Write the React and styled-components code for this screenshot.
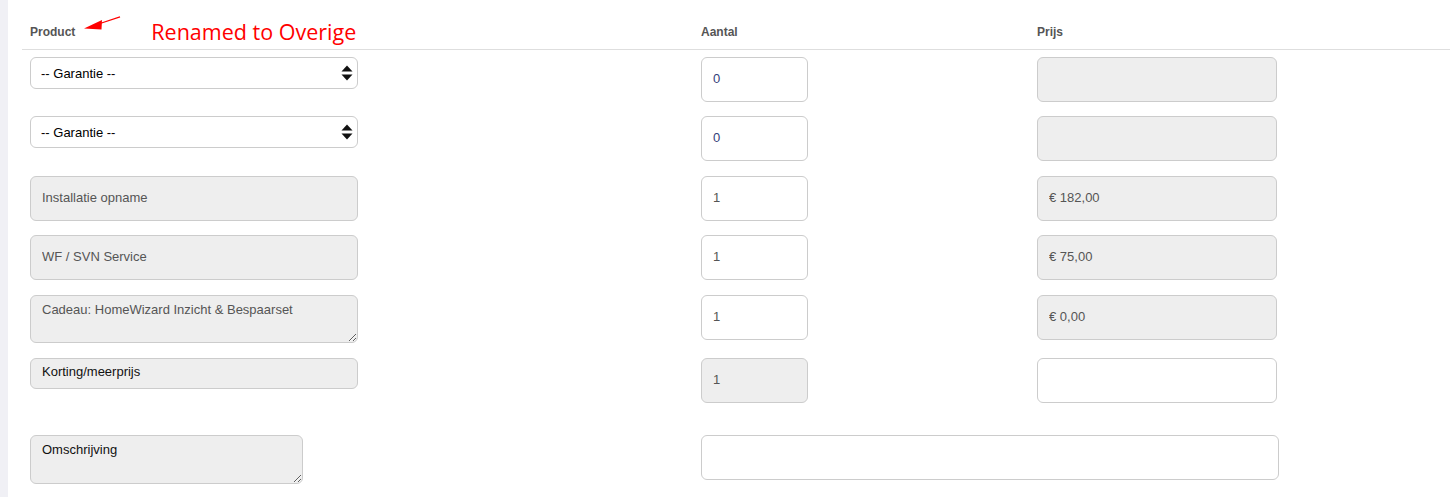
import React from "react";
import styled, { createGlobalStyle } from "styled-components";

const GlobalStyle = createGlobalStyle`
	html, body {
		margin: 0;
		padding: 0;
		background: #fff;
		font-family: "Liberation Sans", Arial, sans-serif;
	}
	* {
		box-sizing: border-box;
	}
`;

const Page = styled.div`
	display: flex;
	min-height: 497px;
	width: 1450px;
	overflow: hidden;
`;

const SideStrip = styled.div`
	width: 8px;
	flex: 0 0 8px;
	background-color: #f0f0f5;
`;

const Main = styled.main`
	flex: 1;
	margin-left: 14px;
`;

const HeaderRow = styled.div`
	display: grid;
	grid-template-columns: 671px 336px 1fr;
	height: 50px;
	padding: 24px 0 0 8px;
	border-bottom: 1px solid #dedede;
`;

const HeadCell = styled.div`
	display: flex;
	align-items: center;
	height: 16px;
`;

const HeadLabel = styled.span`
	font-size: 12px;
	font-weight: bold;
	color: #555;
	line-height: 16px;
`;

const Annotation = styled.span`
	margin-left: 30px;
	font-family: "Open Sans", "Noto Sans", sans-serif;
	font-size: 21.5px;
	color: #ff0000;
	line-height: 16px;
`;

const ArrowIcon = styled.svg`
	margin-left: 8px;
	position: relative;
	top: -8px;
	flex: 0 0 auto;
`;

const Body = styled.div`
	padding: 7px 0 0 8px;
`;

const Row = styled.div`
	display: grid;
	grid-template-columns: 671px 336px 1fr;
	align-items: start;
	margin-bottom: ${(p) => p.$gap}px;
`;

const Field = styled.input`
	display: block;
	width: ${(p) => p.$width}px;
	height: ${(p) => p.$height || 45}px;
	padding: 0 11px ${(p) => p.$lift || 2}px;
	border: 1px solid #cccccc;
	border-radius: 6px;
	background-color: ${(p) => (p.$muted ? "#eeeeee" : "#ffffff")};
	color: ${(p) => p.$color || "#555"};
	font-family: "Liberation Sans", Arial, sans-serif;
	font-size: 13px;
	outline: none;
`;

const Area = styled.textarea`
	display: block;
	width: ${(p) => p.$width}px;
	height: ${(p) => p.$height}px;
	padding: 5px 11px;
	border: 1px solid #cccccc;
	border-radius: 6px;
	background-color: #eeeeee;
	color: ${(p) => p.$color || "#555"};
	font-family: "Liberation Sans", Arial, sans-serif;
	font-size: 13px;
	line-height: 18px;
	resize: vertical;
	outline: none;
`;

const SelectWrap = styled.div`
	position: relative;
	width: 328px;
	height: 32px;
`;

const Select = styled.select`
	appearance: none;
	-webkit-appearance: none;
	width: 100%;
	height: 100%;
	padding: 0 28px 0 10px;
	border: 1px solid #cccccc;
	border-radius: 6px;
	background: #ffffff;
	color: #000;
	font-family: "Liberation Sans", Arial, sans-serif;
	font-size: 13px;
	outline: none;
`;

const Caret = styled.svg`
	position: absolute;
	right: 5px;
	top: 8px;
	pointer-events: none;
`;

const Section = styled.div`
	display: grid;
	grid-template-columns: 671px 1fr;
	align-items: start;
`;

const products = [
	{ kind: "select", qty: "0", price: "", priceMuted: true, gap: 14 },
	{ kind: "select", qty: "0", price: "", priceMuted: true, gap: 15 },
	{ kind: "input", label: "Installatie opname", qty: "1", price: "€ 182,00", priceMuted: true, gap: 14 },
	{ kind: "input", label: "WF / SVN Service", qty: "1", price: "€ 75,00", priceMuted: true, gap: 15 },
	{ kind: "area", label: "Cadeau: HomeWizard Inzicht & Bespaarset", qty: "1", price: "€ 0,00", priceMuted: true, gap: 15 },
	{ kind: "korting", label: "Korting/meerprijs", qty: "1", qtyMuted: true, price: "", priceMuted: false, gap: 32 },
];

const GarantieSelect = () => (
	<SelectWrap>
		<Select defaultValue="">
			<option value="">-- Garantie --</option>
		</Select>
		<Caret width="12" height="16" viewBox="0 0 12 16">
			<path d="M6 0.5 L11.5 6.5 H0.5 Z" fill="#111" />
			<path d="M6 15.5 L11.5 9.5 H0.5 Z" fill="#111" />
		</Caret>
	</SelectWrap>
);

const ProductCell = ({ item }) => {
	if (item.kind === "select") return <GarantieSelect />;
	if (item.kind === "area")
		return <Area $width={328} $height={48} defaultValue={item.label} readOnly />;
	if (item.kind === "korting")
		return <Field $width={328} $height={31} $lift={5} $muted $color="#111" defaultValue={item.label} readOnly />;
	return <Field $width={328} $muted defaultValue={item.label} readOnly />;
};

const App = () => {
	return (
		<Page>
			<GlobalStyle />
			<SideStrip />
			<Main>
				<HeaderRow>
					<HeadCell>
						<HeadLabel>Product</HeadLabel>
						<ArrowIcon width="38" height="16" viewBox="0 0 38 16">
							<path d="M17 7.5 L37 0.8" stroke="#ff0000" strokeWidth="1.3" />
							<path d="M1 12.5 L19 4 L18.5 13.5 Z" fill="#ff0000" />
						</ArrowIcon>
						<Annotation>Renamed to Overige</Annotation>
					</HeadCell>
					<HeadCell>
						<HeadLabel>Aantal</HeadLabel>
					</HeadCell>
					<HeadCell>
						<HeadLabel>Prijs</HeadLabel>
					</HeadCell>
				</HeaderRow>
				<Body>
					{products.map((item, i) => (
						<Row key={i} $gap={item.gap}>
							<ProductCell item={item} />
							<Field
								$width={107}
								$muted={item.qtyMuted}
								$color={item.qty === "0" ? "#34407a" : "#555"}
								defaultValue={item.qty}
								readOnly
							/>
							<Field $width={240} $muted={item.priceMuted} defaultValue={item.price} readOnly />
						</Row>
					))}
					<Section>
						<Area $width={273} $height={49} $color="#111" defaultValue="Omschrijving" readOnly />
						<Field $width={578} defaultValue="" readOnly />
					</Section>
				</Body>
			</Main>
		</Page>
	);
};

export default App;
